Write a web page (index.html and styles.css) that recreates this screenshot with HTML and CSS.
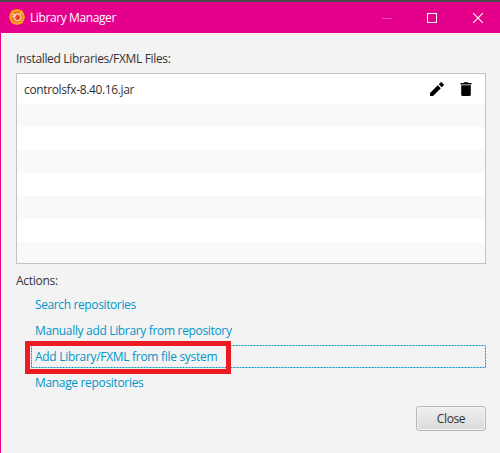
FILE: index.html
```html
<!DOCTYPE html>
<html lang="en">
<head>
<meta charset="utf-8">
<title>Library Manager</title>
<link rel="stylesheet" href="styles.css">
</head>
<body>
<div class="window">
  <header class="titlebar">
    <svg class="logo" width="16" height="16" viewBox="0 0 16 16">
      <path d="M8 0l2.600.5 2.800 1.200 1.500 2.700L16 8l-1.100 3.300-1.500 2.900-2.800 1L8 16l-2.800-.8-2.800-1.200-1.300-2.900L0 8l1.100-3.500 1.400-2.700L5.300.6z" fill="#f8a412"/>
      <circle cx="8" cy="8" r="5.400" fill="#f1662a"/>
      <path d="M4.800 6.200C5 10.400 6.500 11.800 8.500 11.800c2.500 0 3.700-2.200 3.400-4.200-.3-2-2-3.100-4-2.700-1.600.3-2.200 1.500-1.600 2.500" fill="none" stroke="#ffe3cf" stroke-width="1.100"/>
      <path d="M3 5l3 .7M3.300 7.300l2.200.7M10.700 5l1.700-1" stroke="#ffe3cf" stroke-width="1"/>
      <circle cx="8.700" cy="8.400" r="1.900" fill="#ed3c24"/>
    </svg>
    <h1 class="title">Library Manager</h1>
    <svg class="controls" width="104" height="12" viewBox="0 0 104 12" fill="none">
      <path d="M0 6.500h10" stroke="#f04bad"/>
      <rect x="45.500" y="1.500" width="9" height="9" stroke="#fff"/>
      <path d="M91.200 1.200l9.600 9.600M100.800 1.200l-9.600 9.600" stroke="#fff" stroke-width="1.100"/>
    </svg>
  </header>
  <main class="content">
    <h2 class="label installed">Installed Libraries/FXML Files:</h2>
    <ul class="list">
      <li class="row first">
        <span class="file">controlsfx-8.40.16.jar</span>
        <svg class="edit" width="14" height="14" viewBox="0 0 14 14">
          <path d="M0 11v3h3l7.800-7.800-3-3zM13.600 3.400c.4-.4.4-.8 0-1.200L11.800.4c-.4-.4-.8-.4-1.200 0L8.700 2.300l3 3z"/>
        </svg>
        <svg class="trash" width="12" height="14" viewBox="0 0 12 14">
          <path d="M1.200 3.300h9.600v9.200q0 1.500-1.500 1.500H2.700q-1.500 0-1.500-1.500zM.5.900h3L4.200.2h3.600l.7.7h3v1.500H.5z"/>
        </svg>
      </li>
      <li class="row"></li><li class="row"></li><li class="row"></li><li class="row"></li><li class="row"></li><li class="row"></li><li class="row"></li>
    </ul>
    <h2 class="label actions">Actions:</h2>
    <nav class="links">
      <a class="link search">Search repositories</a>
      <a class="link manual">Manually add Library from repository</a>
      <a class="link add">Add Library/FXML from file system
        <svg class="focus" width="455" height="23"><rect x=".5" y=".5" width="454" height="22"/></svg>
        <i class="highlight"></i></a>
      <a class="link manage">Manage repositories</a>
    </nav>
    <footer class="footer"><button class="close">Close</button></footer>
  </main>
</div>
</body>
</html>
```
FILE: styles.css
```css
* { box-sizing: border-box; }
body { margin: 0; font: 12px/18px "Open Sans", "Noto Sans", sans-serif; color: #333; }
h1, h2, ul { margin: 0; padding: 0; font-size: 12px; font-weight: 400; }
.window { width: 500px; height: 453px; overflow: hidden; background: #f3f3f3; border-top: 2px solid #484848; }
.titlebar { height: 31px; display: flex; align-items: center; padding: 0 14px 0 9px; background: #e5008c; color: #fff; }
.logo { margin-top: -1px; }
.title { margin-left: 5px; flex: 1; letter-spacing: -.4px; }
.controls { flex: none; }
.content { height: 420px; padding: 17px 14px 0 15px; border-left: 1px solid #e5008c; }
.label { height: 18px; white-space: nowrap; }
.installed { letter-spacing: -.33px; }
.list { height: 191px; margin-top: 5px; border: 1px solid #c3c3c3; background: #fff; list-style: none; overflow: hidden; }
.row { height: 23px; }
.row:nth-child(even) { background: #f9f9f9; }
.row.first { height: 30px; display: flex; align-items: center; padding: 0 13px 0 7px; }
.file { flex: 1; padding-top: 1px; letter-spacing: -.36px; }
.edit { margin-right: 16px; }
.actions { margin-top: 7px; padding-top: 1px; letter-spacing: -.27px; }
.links { display: flex; flex-direction: column; gap: 3px; margin: 4px 0 0 15px; }
.link { position: relative; height: 23px; padding: 3px 4px 0; color: #0096c9; white-space: nowrap; }
.search { letter-spacing: -.38px; }
.manual { letter-spacing: -.33px; }
.add { letter-spacing: -.3px; }
.manage { letter-spacing: -.33px; }
.focus { position: absolute; left: 0; top: 0; fill: none; stroke: #0096c9; stroke-dasharray: 2 1; }
.highlight { position: absolute; left: -6px; top: -4px; width: 206px; height: 33px; border: 5px solid #ed1c24; }
.footer { display: flex; justify-content: flex-end; margin-top: 12px; }
.close { width: 70px; height: 25px; padding: 1px 0 0; border: 1px solid #b5b5b5; border-radius: 3px; background: linear-gradient(#efefef, #dadada); box-shadow: inset 0 0 0 1px #f4f4f4; font: inherit; letter-spacing: -.4px; color: #333; }
```
